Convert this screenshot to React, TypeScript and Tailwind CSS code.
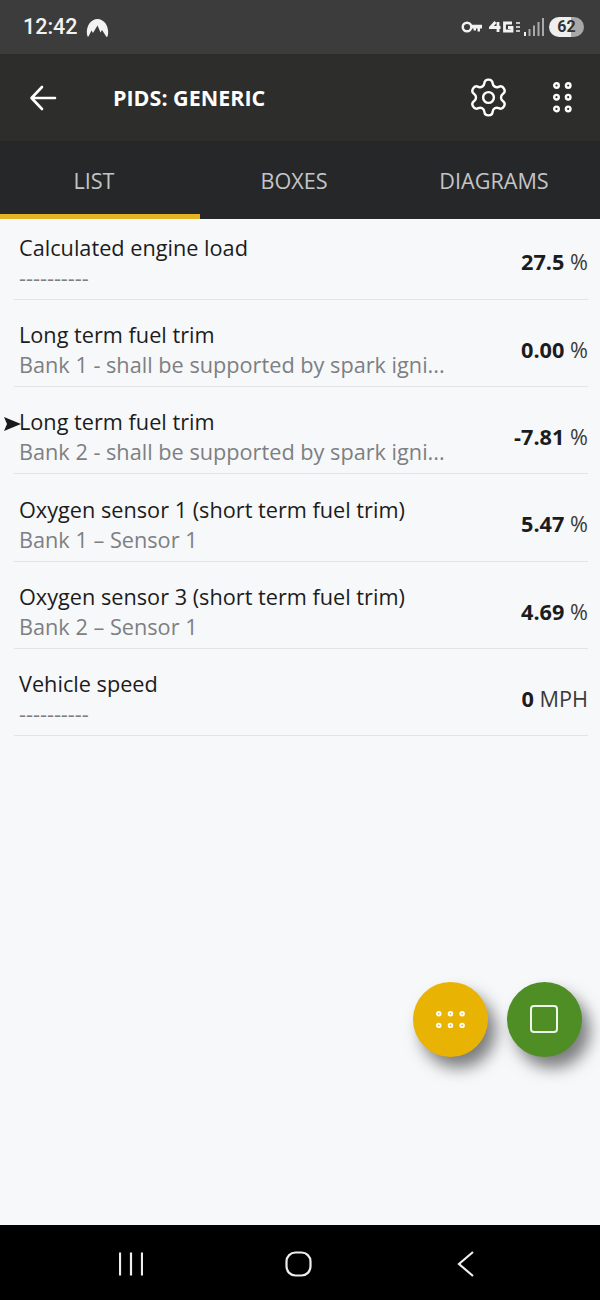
import { Settings } from "lucide-react";

const font = { fontFamily: '"Open Sans", sans-serif' };

const rows = [
  { title: "Calculated engine load", sub: "----------", value: "27.5", unit: "%" },
  { title: "Long term fuel trim", sub: "Bank 1 - shall be supported by spark igni...", value: "0.00", unit: "%" },
  { title: "Long term fuel trim", sub: "Bank 2 - shall be supported by spark igni...", value: "-7.81", unit: "%", active: true },
  { title: "Oxygen sensor 1 (short term fuel trim)", sub: "Bank 1 – Sensor 1", value: "5.47", unit: "%" },
  { title: "Oxygen sensor 3 (short term fuel trim)", sub: "Bank 2 – Sensor 1", value: "4.69", unit: "%" },
  { title: "Vehicle speed", sub: "----------", value: "0", unit: "MPH" },
];

const Dots = ({ cols, rows, gap, r, sw }: { cols: number; rows: number; gap: number; r: number; sw: number }) => {
  const pad = r + sw / 2;
  const w = (cols - 1) * gap + 2 * pad;
  const h = (rows - 1) * gap + 2 * pad;
  const circles = [];
  for (let y = 0; y < rows; y++) {
    for (let x = 0; x < cols; x++) {
      circles.push(
        <circle key={`${x}-${y}`} cx={pad + x * gap} cy={pad + y * gap} r={r} fill="none" stroke="currentColor" strokeWidth={sw} />
      );
    }
  }
  return (
    <svg width={w} height={h} viewBox={`0 0 ${w} ${h}`} className="text-white">
      {circles}
    </svg>
  );
};

const StatusBar = () => (
  <div className="flex h-[54px] items-center justify-between bg-[#3c3c3c] pl-[23px] pr-4">
    <div className="flex items-center gap-[8px]">
      <span className="text-[21.500px] font-medium leading-none text-[#f2f2f2]" style={{ fontFamily: "Roboto, sans-serif" }}>12:42</span>
      <svg width="23" height="19" viewBox="0 0 23 19">
        <path d="M1.500 18.500C-1 11 3.500 1 11.500 1s12.500 10 10 17.500l-1 .5-4.500-7-1.500 2.500L11.500 7.500 7 15l-1.500-2.500-3 6z" fill="#f2f2f2" />
      </svg>
    </div>
    <div className="flex items-center">
      <svg width="21" height="12" viewBox="0 0 21 12" className="mr-[7px]">
        <circle cx="6" cy="6" r="4.300" fill="none" stroke="#f2f2f2" strokeWidth="2.400" />
        <path d="M11 3.800h10v3.600h-2v3h-2.500v-3h-1.500v2H12.500v-2H11z" fill="#f2f2f2" />
      </svg>
      <svg width="32" height="12" viewBox="0 0 32 12" className="mr-[3px]" fill="none" stroke="#f2f2f2" strokeWidth="2.800">
        <path d="M6.500 1 1.500 6.500h10M9 1v10" />
        <path d="M23 2h-7.500v8H23V6.500h-4" />
        <path d="M27 2h4M27 6h4M27 10h4" strokeWidth="1.600" />
      </svg>
      <svg width="20" height="20" viewBox="0 0 20 20" className="mr-[5px]" fill="#a9a9a9">
        <rect x="0" y="15" width="2" height="4" fill="#f2f2f2" />
        <rect x="4.500" y="12" width="2" height="7" />
        <rect x="9" y="8.500" width="2" height="10.500" />
        <rect x="13.500" y="5" width="2" height="14" />
        <rect x="18" y="1" width="2" height="18" />
      </svg>
      <div className="flex h-[20px] w-[35px] items-center justify-center rounded-full bg-[linear-gradient(90deg,#efefef_0%,#efefef_62%,#a8a8a8_62%,#a8a8a8_100%)] text-[16px] font-bold text-[#333]" style={{ fontFamily: "Roboto, sans-serif" }}>
        62
      </div>
    </div>
  </div>
);

const Toolbar = () => (
  <div className="flex h-[87px] items-center bg-[#2d2d2b] text-white">
    <svg width="28" height="26" viewBox="0 0 28 26" className="ml-[29px]" fill="none" stroke="currentColor" strokeWidth="2.600" strokeLinecap="round" strokeLinejoin="round">
      <path d="M26 13H3M13 2 2.500 13 13 24" />
    </svg>
    <span className="ml-[56px] text-[21.500px] font-bold leading-none" style={font}>PIDS: GENERIC</span>
    <Settings size={43} strokeWidth={1.350} className="ml-auto" />
    <div className="ml-[43px] mr-[28px] flex">
      <Dots cols={2} rows={3} gap={11.700} r={2.300} sw={2.400} />
    </div>
  </div>
);

const Tabs = () => (
  <div className="flex h-[78px] bg-[#262728]" style={font}>
    {["LIST", "BOXES", "DIAGRAMS"].map((tab, i) => (
      <div key={tab} className="relative flex w-1/3 items-center justify-center pt-[3px] text-[21.600px] text-[#c4c5c6]">
        <span className={i === 2 ? "ml-[-12px]" : "mr-[12px]"}>{tab}</span>
        {i === 0 && <div className="absolute bottom-0 left-0 h-[5px] w-full bg-[#e6b325]" />}
      </div>
    ))}
  </div>
);

const Row = ({ title, sub, value, unit, active }: (typeof rows)[number]) => (
  <div className="relative flex h-[87.300px] items-center justify-between border-b border-[#e2e4e6] pl-[5px] pt-[14px]">
    <div className="min-w-0">
      <div className="text-[21.700px] leading-[30px] text-[#1c1c1c]">{title}</div>
      <div className="text-[21.700px] leading-[30px] text-[#7d7f82]">{sub}</div>
    </div>
    <div className="whitespace-nowrap text-[21.700px] text-[#1c1c1c]">
      <span className="font-bold">{value}</span> <span className="text-[#3a3a3a]">{unit}</span>
    </div>
    {active && (
      <svg width="17" height="14" viewBox="0 0 17 14" className="absolute left-[-10px] top-[30px]">
        <path d="M0 0 17 7 0 14 3 7z" fill="#1a1a1a" />
      </svg>
    )}
  </div>
);

export default function App() {
  return (
    <div className="flex h-[1300px] w-[600px] flex-col overflow-hidden bg-[#f7f8fa]" style={font}>
      <StatusBar />
      <Toolbar />
      <Tabs />
      <div className="relative flex-1">
        <div className="ml-[14px] mr-[12px] mt-[-6.500px]">
          {rows.map((row, i) => (
            <Row key={i} {...row} />
          ))}
        </div>
        <div className="absolute bottom-[168px] right-[18px] flex gap-[19px]">
          <div className="flex h-[75px] w-[75px] items-center justify-center rounded-full bg-[#e9b303] shadow-[8px_11px_16px_rgba(0,0,0,0.5)]">
            <Dots cols={3} rows={2} gap={11.700} r={1.800} sw={1.900} />
          </div>
          <div className="flex h-[75px] w-[75px] items-center justify-center rounded-full bg-[#4f8e24] shadow-[8px_11px_16px_rgba(0,0,0,0.5)]">
            <div className="mr-[2px] mt-[-1px] h-[28px] w-[28px] rounded-[4px] border-[2.500px] border-white/90" />
          </div>
        </div>
      </div>
      <div className="flex h-[75px] items-center justify-center bg-black pt-[2px] pr-[7px]">
        <svg width="24" height="26" viewBox="0 0 24 26" className="mr-[142px]" stroke="#eee" strokeWidth="2.200" fill="none">
          <path d="M1 1.500v23M12 1.500v23M23 1.500v23" />
        </svg>
        <svg width="27" height="26" viewBox="0 0 27 26" className="mr-[145px]" stroke="#eee" strokeWidth="2.200" fill="none">
          <rect x="1.500" y="1.500" width="24" height="23" rx="9" />
        </svg>
        <svg width="18" height="26" viewBox="0 0 18 26" stroke="#eee" strokeWidth="2.200" fill="none">
          <path d="M16 1 2 13l14 12" />
        </svg>
      </div>
    </div>
  );
}
